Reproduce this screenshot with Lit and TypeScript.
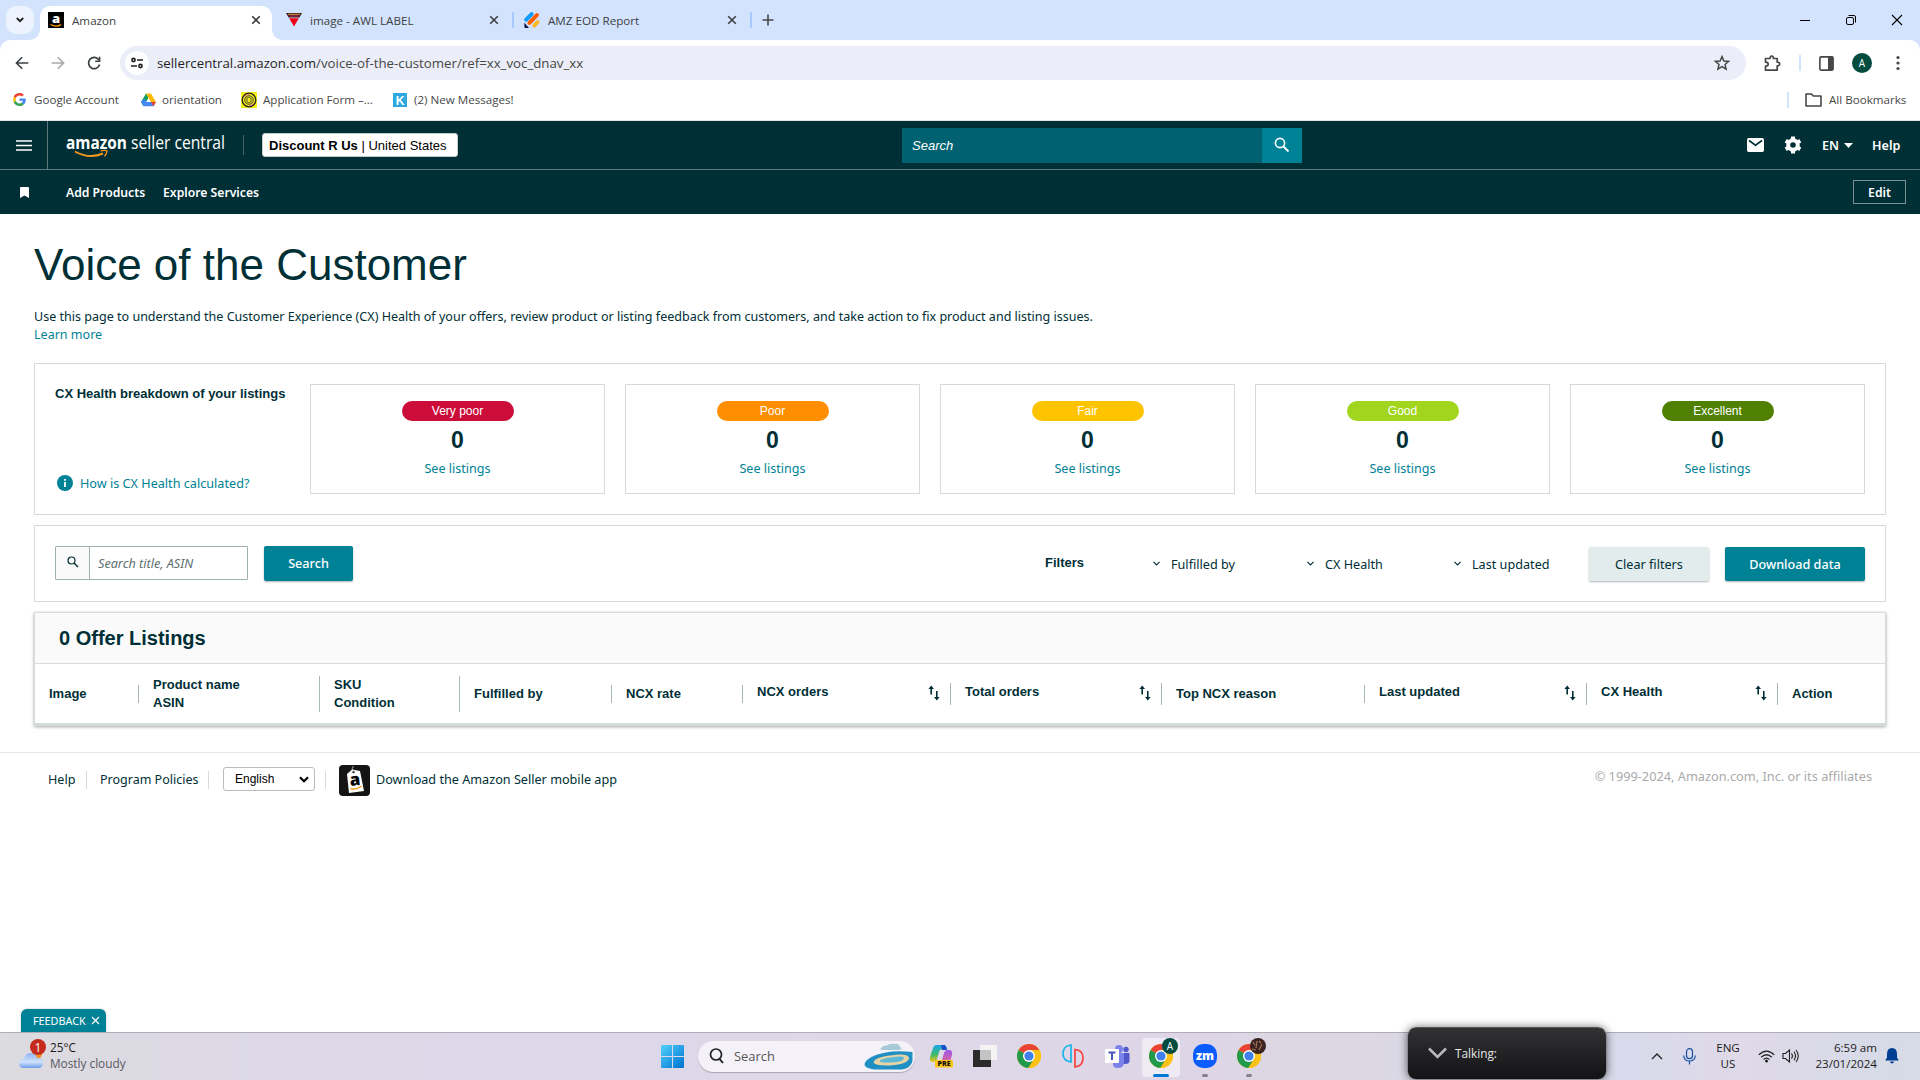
import { LitElement, html, css, svg } from "lit";
import { customElement } from "lit/decorators.js";

type Col = { a: string; b?: string; cls: string; sort?: boolean };

const COLS: Col[] = [
  { a: "Image", cls: "c1" },
  { a: "Product name", b: "ASIN", cls: "c2" },
  { a: "SKU", b: "Condition", cls: "c3" },
  { a: "Fulfilled by", cls: "c4" },
  { a: "NCX rate", cls: "c5" },
  { a: "NCX orders", cls: "c6", sort: true },
  { a: "Total orders", cls: "c7", sort: true },
  { a: "Top NCX reason", cls: "c8" },
  { a: "Last updated", cls: "c9", sort: true },
  { a: "CX Health", cls: "c10", sort: true },
  { a: "Action", cls: "c11" },
];

const HEALTH = [
  ["Very poor", "vp"],
  ["Poor", "po"],
  ["Fair", "fa"],
  ["Good", "go"],
  ["Excellent", "ex"],
];

const closeX = html`<svg class="x" width="10" height="10" viewBox="0 0 10 10"><path d="M1.2 1.2 8.8 8.8M8.8 1.2 1.2 8.8" stroke="#3c4043" stroke-width="1.6" fill="none"/></svg>`;

const chromeMark = svg`
  <circle cx="12" cy="12" r="12" fill="#fbc116"/>
  <path d="M12 12 1.6 6A12 12 0 0 1 22.4 6H12Z" fill="#ea4335"/>
  <path d="M1.6 6A12 12 0 0 0 11.4 24L17 15 12 12Z" fill="#229a4b"/>
  <path d="M12 6H22.4A12 12 0 0 1 11.4 24L17.2 15Z" fill="#fbc116"/>
  <circle cx="12" cy="12" r="6" fill="#fff"/>
  <circle cx="12" cy="12" r="4.6" fill="#3f80ec"/>`;

@customElement("app-root")
export class AppRoot extends LitElement {
  static styles = css`
    :host { display: flex; flex-direction: column; width: 1920px; height: 1080px; overflow: hidden; background: #fff; color: #002f36; font-family: "Noto Sans", sans-serif; font-size: 12.65px; }
    * { box-sizing: border-box; }
    svg { display: block; flex: none; overflow: visible; }
    .row { display: flex; align-items: center; }
    .ui { font-family: "Open Sans", sans-serif; }
    .arial { font-family: "Liberation Sans", sans-serif; }
    span, a, b { white-space: nowrap; }
    .grow { flex: 1; }

    .tabs { height: 40px; flex: none; background: #d3e3fd; display: flex; align-items: flex-start; font-size: 11.65px; color: #3c4043; }
    .chev { width: 28px; height: 28px; margin: 6px 6px 0; border-radius: 10px; background: #ecf3fe; display: grid; place-items: center; }
    .tab { height: 28px; margin-top: 6px; display: flex; align-items: center; }
    .tab.on { position: relative; width: 232px; height: 34px; padding: 0 11px 6px 8px; background: #fff; border-radius: 10px 10px 0 0; }
    .tab.on::before, .tab.on::after { content: ""; position: absolute; bottom: 0; width: 10px; height: 10px; }
    .tab.on::before { left: -10px; background: radial-gradient(circle at 0 0, transparent 9.5px, #fff 10px); }
    .tab.on::after { right: -10px; background: radial-gradient(circle at 100% 0, transparent 9.5px, #fff 10px); }
    .tab span { margin-left: 8px; flex: 1; }
    .t2 { width: 240px; padding: 0 13px 0 14px; }
    .t3 { width: 236px; padding: 0 13px 0 10px; }
    .tsep { width: 2px; height: 16px; margin-top: 12px; background: #a8c7fa; border-radius: 1px; }
    .plus { margin: 14px 0 0 10px; }
    .win { display: flex; gap: 33px; padding: 13px 16px 0 0; }

    .bar { height: 46px; flex: none; background: #d3e3fd; }
    .barin { height: 46px; background: #fff; border-radius: 10px 10px 0 0; padding: 0 20px 0 15px; }
    .url { flex: 1; height: 34px; margin: 0 18px 0 19px; padding: 0 16px 0 5px; border-radius: 17px; background: #ebeef8; font-size: 13.28px; color: #1f1f1f; }
    .site { width: 24px; height: 24px; border-radius: 50%; background: #fff; display: grid; place-items: center; margin-right: 8px; }
    .url i { font-style: normal; color: #474747; }
    .vs { width: 2px; height: 16px; flex: none; background: #d3e3fd; }
    .m18 { margin: 0 18px; }
    .ava { width: 20px; height: 20px; flex: none; margin-left: 18px; border-radius: 50%; background: #044c3f; color: #fff; font-size: 10px; display: grid; place-items: center; }
    .dots { margin-left: 24px; }

    .bm { height: 35px; flex: none; padding: 0 15px 7px 13px; border-bottom: 1px solid #e3e3e3; font-size: 11.6px; color: #474747; }
    .bm span { margin-left: 6px; }
    .bm .k1 { width: 107px; margin-left: 8px; }
    .k2 { width: 79px; }
    .k3 { width: 130px; }
    .bm .k4 { margin-left: 7px; }
    .fo { margin-left: 16px; }
    .bm .k5 { width: 76px; margin-left: 7px; }

    .nav { height: 49px; flex: none; background: #002f36; color: #fff; border-bottom: 1px solid #5f777b; font-weight: 600; font-size: 12.6px; }
    .ham { width: 48px; height: 48px; border-right: 1px solid #5f777b; display: grid; place-items: center; }
    .logo { margin-left: 18px; width: 160px; }
    .nsep { width: 1px; height: 20px; background: #4b6266; margin: 0 18px 0 17px; }
    .store { width: 196px; height: 24px; background: #fff; border: 1px solid #c3cccd; border-radius: 3px; color: #000; font-size: 13px; font-weight: 400; padding-left: 6px; }
    .store b { font-weight: 700; }
    .sbox { width: 400px; height: 35px; margin-left: 444px; }
    .sin { width: 360px; height: 35px; background: #006170; padding-left: 10px; font-style: italic; font-weight: 400; font-size: 13px; }
    .sbtn { width: 40px; height: 35px; background: #008296; display: grid; place-items: center; }
    .gear { margin: 0 20px 0 20px; }
    .caret { margin: 0 19px 0 4px; }
    .hp { margin-right: 18px; width: 30px; }
    .en { width: 18px; }
    .sub { height: 44px; flex: none; background: #002f36; color: #fff; font-weight: 600; padding: 0 14px 0 20px; font-size: 12.2px; }
    .s1 { margin-left: 37px; width: 97px; }
    .edit { width: 53px; height: 24px; border: 1px solid #7d9093; justify-content: center; }

    .page { padding: 0 34px; flex: none; }
    h1 { margin: 25px 0 0; font: 400 44px/51px "Liberation Sans", sans-serif; height: 51px; white-space: nowrap; }
    .intro { margin: 18px 0 0; line-height: 18px; height: 36px; font-size: 12.54px; }
    .intro div { white-space: nowrap; }
    .link { color: #008296; }
    .card { border: 1px solid #d5dbdb; }
    .health { margin-top: 19px; height: 152px; display: flex; gap: 20px; padding: 20px 20px 0 20px; }
    .hl { width: 235px; display: flex; flex-direction: column; padding-top: 1px; }
    .hl b { font-size: 13px; line-height: 18px; }
    .how { margin-top: 71px; padding-left: 2px; gap: 7px; height: 18px; }
    .box { width: 295px; height: 110px; display: flex; flex-direction: column; align-items: center; border: 1px solid #d5dbdb; padding-top: 16px; }
    .pill { width: 112px; height: 20px; border-radius: 10px; color: #fff; font-size: 12px; line-height: 20px; text-align: center; }
    .vp { background: #cc0c39; } .po { background: #ff8f00; } .fa { background: #ffc400; } .go { background: #a2d61e; } .ex { background: #508000; }
    .n { font-size: 23px; font-weight: 700; line-height: 26px; margin-top: 6px; }
    .box .link { line-height: 18px; margin-top: 7px; font-size: 12.55px; }

    .tools { margin-top: 10px; height: 77px; padding: 0 20px; }
    .grp { width: 193px; height: 34px; border: 1px solid #9fb0b0; background: #fff; border-radius: 1px; margin-bottom: 1px; }
    .gi { width: 34px; height: 32px; background: #fafafa; border-right: 1px solid #9fb0b0; display: grid; place-items: center; padding-bottom: 2px; }
    .gt { padding-left: 8px; font-style: italic; color: #5d6f72; }
    .btn { height: 34px; border-radius: 2px; background: #008296; color: #fff; font-weight: 500; justify-content: center; box-shadow: 0 1px 2px rgba(0,0,0,.3); }
    .b1 { width: 89px; height: 35px; margin-left: 16px; padding-bottom: 1px; }
    .b2 { width: 120px; background: #e3eced; color: #002f36; font-weight: 400; margin: 1px 16px 0 40px; }
    .b3 { width: 140px; margin-top: 1px; }
    .f { gap: 11px; }
    .f1 { width: 154px; } .f2 { width: 147px; } .f3 { width: 95px; }
    .flt { font-size: 13px; font-weight: 700; width: 108px; padding-bottom: 3px; }

    .tbl { margin-top: 10px; height: 114px; border-bottom: 3px solid #d5dbdb; box-shadow: 0 1px 3px rgba(0,0,0,.35); }
    .th { height: 51px; background: #fafafa; border-bottom: 1px solid #d5dbdb; padding-left: 24px; font-size: 20px; font-weight: 700; }
    .cols { height: 60px; font-size: 13px; font-weight: 700; line-height: 18px; }
    .col { display: flex; align-items: center; border-right: 1px solid #aab7b8; height: 18px; padding-left: 14px; }
    .two { height: 36px; }
    .srt { height: 22px; padding-right: 10px; justify-content: space-between; }
    .srt span { margin-top: -4px; }
    .srt svg { margin-top: -2px; }
    .c1 { width: 104px; } .c2 { width: 181px; } .c3 { width: 140px; } .c4 { width: 152px; } .c5 { width: 131px; } .c6 { width: 208px; } .c7 { width: 211px; } .c8 { width: 203px; } .c9 { width: 222px; } .c10 { width: 191px; } .c11 { border: 0; }

    .foot { margin-top: 26px; border-top: 1px solid #e7e9e9; height: 54px; flex: none; padding: 0 48px; }
    .foot span { margin-top: -1px; }
    .fs { width: 1px; height: 18px; flex: none; background: #d5dbdb; margin: 0 13px 0 10px; }
    .h1x { width: 28px; } .h2x { width: 98px; font-size: 12.5px; }
    .app { margin: 2px 5px 0 0; }
    .sel { width: 92px; height: 24px; border: 1px solid #bbb; border-radius: 3px; margin: -1px 0 0 1px; padding: 0 5px 0 11px; color: #000; font-size: 12px; justify-content: space-between; }
    .copy { color: #aaa; padding-bottom: 6px; font-size: 12.75px; }

    .fb { width: 85px; height: 23px; margin-left: 21px; background: #008296; color: #fff; border-radius: 6px 6px 0 0; font-size: 10.8px; padding-left: 12px; gap: 5px; box-shadow: 0 0 2px rgba(0,0,0,.3); }
    .task { height: 48px; flex: none; border-top: 1px solid #b0adb8; background: linear-gradient(90deg, #dcdbdf 0, #dcd8e6 270px, #dcd8ea 540px, #ded8e8 800px, #ded6e6 1200px, #dcd7e2 1320px, #d8daec 1620px, #dfd9e8 1740px, #d5dbe7 1920px); position: relative; font-size: 11.8px; color: #1b1b1b; }
    .wx { margin-left: 19px; width: 642px; padding-bottom: 2px; }
    .wx .txt { line-height: 16px; margin-left: 4px; padding-bottom: 1px; }
    .grey { color: #5a5960; }
    .tsearch { width: 217px; height: 31px; border-radius: 16px; background: #f4f2f8; box-shadow: 0 1px 1px #aaa6b4; margin: 0 11px 1px 14px; padding: 0 1px 0 11px; color: #555; font-size: 12.9px; gap: 10px; }
    .ic { width: 30px; height: 44px; margin-right: 14px; display: flex; align-items: center; justify-content: center; position: relative; }
    .ic > svg { margin-bottom: 1px; }
    .act::before { content: ""; position: absolute; left: -4px; right: -4px; top: 3px; height: 39px; border-radius: 4px; background: #eeebf4; }
    .act svg, .dot svg { position: relative; }
    .face svg, .act svg { top: -2px; }
    .act::after, .dot::after { content: ""; position: absolute; bottom: 2px; width: 16px; height: 3px; border-radius: 2px; background: #0078d4; }
    .dot::after { width: 6px; background: #85828c; }
    .talk { position: absolute; left: 1407px; top: -6px; width: 200px; height: 53px; border-radius: 9px; border: 1px solid #8b8b8f; border-top-color: #555; background: linear-gradient(#323234, #131315); box-shadow: 0 0 9px rgba(0,0,0,.55); color: #e8e8e8; padding: 0 0 2px 20px; gap: 8px; }
    .tray { padding: 0 21px 1px 0; }
    .mic { margin-left: 20px; }
    .eng { width: 30px; margin: 0 15px 0 17px; }
    .spk { margin-left: 7px; }
    .clock { width: 64px; margin: 0 8px 0 14px; white-space: nowrap; }
    .ctr { text-align: center; line-height: 16px; font-size: 11.6px; }
    .rt { display: flex; flex-direction: column; align-items: flex-end; line-height: 16px; font-size: 11.6px; padding-bottom: 1px; }
  `;

  private sortIcon() {
    return html`<svg width="12" height="16" viewBox="0 0 12 16"><path d="M3.2 9.5V2M8.8 6v8" stroke="#002f36" stroke-width="1.6"/><path d="M.4 4 3.2.6 6 4ZM6 12 8.8 15.4 11.6 12Z" fill="#002f36"/></svg>`;
  }

  private chevron() {
    return html`<svg width="7" height="5" viewBox="0 0 7 5"><path d="M.5.8 3.5 3.8 6.5.8" fill="none" stroke="#002f36" stroke-width="1.2"/></svg>`;
  }

  private chrome() {
    return html`
      <div class="tabs ui">
        <div class="chev"><svg width="8" height="6" viewBox="0 0 8 6"><path d="M.8 1 4 4.2 7.2 1" fill="none" stroke="#1f1f1f" stroke-width="1.8"/></svg></div>
        <div class="tab on">
          <svg width="16" height="16" viewBox="0 0 16 16"><rect width="16" height="16" fill="#000"/><text x="8" y="10.5" text-anchor="middle" font-family="Open Sans" font-weight="800" font-size="13" fill="#fff">a</text><path d="M2.5 12.5Q8 15.6 13 12.6" fill="none" stroke="#ff9900" stroke-width="1.3"/></svg>
          <span class="g1">Amazon</span>${closeX}
        </div>
        <div class="tab t2">
          <svg width="16" height="16" viewBox="0 0 16 16"><path d="M0 1H16L13.4 5.4H2.6Z" fill="#3a1626"/><path d="M3.2 6.2H12.8L8 14.500Z" fill="#f00018"/><path d="M2 2.3H14" stroke="#c58a3c" stroke-width="1.2"/><path d="M3.500 4H12.500" stroke="#c0304a" stroke-width="1"/></svg>
          <span>image - AWL LABEL</span>${closeX}
        </div>
        <div class="tsep"></div>
        <div class="tab t3">
          <svg width="16" height="16" viewBox="0 0 16 16"><path d="M2.2 7.6 7.6 2.2" stroke="#0a9bff" stroke-width="4" stroke-linecap="round"/><path d="M5.4 10.8 13 3" stroke="#ff6100" stroke-width="4" stroke-linecap="round"/><path d="M10.2 13.6 13.6 10.2" stroke="#ffb629" stroke-width="4" stroke-linecap="round"/><path d="M.4 10.8 5 16H1.4Q.4 16 .4 15Z" fill="#0a1551"/></svg>
          <span>AMZ EOD Report</span>${closeX}
        </div>
        <div class="tsep"></div>
        <svg class="plus" width="12" height="12" viewBox="0 0 12 12"><path d="M6 .5V11.5M.5 6H11.5" stroke="#474747" stroke-width="1.6"/></svg>
        <div class="grow"></div>
        <div class="win">
          <svg width="14" height="14" viewBox="0 0 14 14"><path d="M2 7.5H12" stroke="#000"/></svg>
          <svg width="12" height="14" viewBox="0 0 12 14"><rect x="1.5" y="4.5" width="7" height="7" rx="1.5" fill="none" stroke="#000"/><path d="M3.5 2.5H9a1.5 1.5 0 0 1 1.5 1.5V9.5" fill="none" stroke="#000"/></svg>
          <svg width="14" height="14" viewBox="0 0 14 14"><path d="M2 2 12 12M12 2 2 12" stroke="#000" stroke-width="1.1"/></svg>
        </div>
      </div>
      <div class="bar"><div class="barin row">
        <svg width="14" height="14" viewBox="0 0 14 14"><path d="M13.3 7H1.6M7.2 1.2 1.4 7 7.2 12.8" fill="none" stroke="#3c4043" stroke-width="1.6"/></svg>
        <svg class="fw" width="35" height="14" viewBox="0 0 35 14"><path d="M22.7 7H34.4M28.8 1.2 34.6 7 28.8 12.8" fill="none" stroke="#a5a7a9" stroke-width="1.6"/></svg>
        <svg width="37" height="14" viewBox="0 0 37 14"><path d="M34.9 4A5.6 5.6 0 1 0 35.6 8.5" fill="none" stroke="#3c4043" stroke-width="1.7"/><path d="M36.4 .8V6H31.2V4.4H34.8V.8Z" fill="#3c4043"/></svg>
        <div class="url row ui">
          <div class="site"><svg width="12" height="12" viewBox="0 0 12 12"><g fill="none" stroke="#1f1f1f" stroke-width="1.6"><circle cx="2.5" cy="3" r="1.6"/><path d="M6 3H12M0 9H6"/><circle cx="9.5" cy="9" r="1.6"/></g></svg></div>
          <span class="u1">sellercentral.amazon.com<i>/voice-of-the-customer/ref=xx_voc_dnav_xx</i></span>
          <div class="grow"></div>
          <svg width="16" height="16" viewBox="0 0 16 16"><path d="M8 1.6 9.9 6 14.6 6.4 11 9.5 12.1 14.2 8 11.7 3.9 14.2 5 9.5 1.4 6.4 6.1 6Z" fill="none" stroke="#474747" stroke-width="1.5"/></svg>
        </div>
        <svg width="17" height="17" viewBox="0 0 17 17"><path d="M1.5 3.5H6Q6 1 7.7 1T9.4 3.5H13.2V7.2Q15.8 7.2 15.8 9T13.2 10.8V15.2H1.5V11.2Q4.2 11 4.2 9.2T1.5 7.2Z" fill="none" stroke="#474747" stroke-width="1.7" stroke-linejoin="round"/></svg>
        <div class="vs m18"></div>
        <svg class="pnl" width="15" height="15" viewBox="0 0 15 15"><rect x=".9" y=".9" width="13.2" height="13.2" rx="1" fill="none" stroke="#474747" stroke-width="1.6"/><path d="M9 1H14V14H9Z" fill="#474747"/></svg>
        <div class="ava ui">A</div>
        <svg class="dots" width="4" height="16" viewBox="0 0 4 16" fill="#474747"><circle cx="2" cy="2.5" r="1.6"/><circle cx="2" cy="8" r="1.6"/><circle cx="2" cy="13.5" r="1.6"/></svg>
      </div></div>
      <div class="bm row ui">
        <svg width="13" height="13" viewBox="0 0 48 48"><path fill="#ea4335" d="M24 9.5c3.5 0 6.700 1.200 9.200 3.600l6.900-6.900C35.900 2.400 30.500 0 24 0 14.600 0 6.500 5.400 2.600 13.200l8 6.200C12.400 13.700 17.700 9.500 24 9.500z"/><path fill="#4285f4" d="M47 24.600c0-1.600-.2-3.100-.4-4.600H24v9h12.900c-.6 3-2.200 5.500-4.700 7.200l7.700 6C44.400 38 47 32 47 24.600z"/><path fill="#fbbc05" d="M10.500 28.600a14.500 14.500 0 0 1 0-9.200l-8-6.200a24 24 0 0 0 0 21.600z"/><path fill="#34a853" d="M24 48c6.500 0 11.900-2.100 15.900-5.800l-7.700-6c-2.200 1.500-4.900 2.300-8.200 2.300-6.300 0-11.600-4.200-13.500-9.900l-8 6.200C6.500 42.600 14.600 48 24 48z"/></svg>
        <span class="k1">Google Account</span>
        <svg class="i2" width="15" height="14" viewBox="0 0 16 14"><path d="M5.4 0 0 9 2.7 13.7 8 4.5Z" fill="#0f9d58"/><path d="M5.4 0H10.6L16 9H10.6Z" fill="#ffba00"/><path d="M5.4 9H16L13.3 13.7H2.7Z" fill="#4285f4"/><path d="M10.6 9H16L13.3 13.7Z" fill="#ea4335"/><path d="M0 9 2.7 13.7 5.4 9 4 5Z" fill="#4285f4"/></svg>
        <span class="k2">orientation</span>
        <svg class="i3" width="16" height="16" viewBox="0 0 16 16"><rect width="16" height="16" fill="#f5f014"/><circle cx="8" cy="8" r="6.8" fill="none" stroke="#222" stroke-width="1.3"/><circle cx="8" cy="8" r="4.2" fill="none" stroke="#333" stroke-width="1"/><path d="M3 5Q4.500 2.500 8 2.300M13 11Q11.500 13.500 8 13.700" fill="none" stroke="#e8708a" stroke-width="1"/><rect x="6" y="5.5" width="4" height="5" rx="1.5" fill="none" stroke="#333" stroke-width=".8"/></svg>
        <span class="k3">Application Form –...</span>
        <svg class="i4" width="14" height="14" viewBox="0 0 14 14"><rect width="14" height="14" fill="#2fa8e0"/><text x="7" y="11.5" text-anchor="middle" font-family="Liberation Sans" font-weight="700" font-size="12" fill="#fff">K</text></svg>
        <span class="k4">(2) New Messages!</span>
        <div class="grow"></div>
        <div class="vs"></div>
        <svg class="fo" width="17" height="14" viewBox="0 0 17 14"><path d="M1 1H6.5L8.3 3H16V13H1Z" fill="none" stroke="#474747" stroke-width="1.6" stroke-linejoin="round"/></svg>
        <span class="k5">All Bookmarks</span>
      </div>`;
  }

  private header() {
    return html`
      <div class="nav row">
        <div class="ham"><svg width="16" height="11" viewBox="0 0 16 11"><path d="M0 1H16M0 5.5H16M0 10H16" stroke="#fff" stroke-width="1.7"/></svg></div>
        <svg class="logo" width="160" height="30" viewBox="0 0 160 30"><text x="0" y="19" font-family="Open Sans" font-weight="700" font-size="17" fill="#fff" textLength="61" lengthAdjust="spacingAndGlyphs">amazon</text><text x="65" y="19" font-family="Open Sans" font-weight="400" font-size="17.5" fill="#fff" textLength="94" lengthAdjust="spacingAndGlyphs">seller central</text><path d="M9 21.500Q23 29.500 37 23.500" fill="none" stroke="#f7981d" stroke-width="2"/><path d="M34.500 20.800Q39.500 19.800 41 20.800 41 23.300 38.500 26.300" fill="none" stroke="#f7981d" stroke-width="1.3"/></svg>
        <div class="nsep"></div>
        <div class="store row arial"><span><b>Discount R Us</b> | United States</span></div>
        <div class="sbox row"><div class="sin row arial">Search</div><div class="sbtn"><svg width="16" height="16" viewBox="0 0 16 16"><circle cx="6" cy="6" r="4.6" fill="none" stroke="#fff" stroke-width="1.6"/><path d="M9.5 9.5 14.5 14.5" stroke="#fff" stroke-width="1.8"/></svg></div></div>
        <div class="grow"></div>
        <svg class="mail" width="17" height="14" viewBox="0 0 17 14"><rect width="17" height="14" rx="1.8" fill="#fff"/><path d="M2 2.5 8.5 7.2 15 2.5" fill="none" stroke="#002f36" stroke-width="1.6"/></svg>
        <svg class="gear" width="18" height="18" viewBox="0 0 18 18"><circle cx="9" cy="9" r="4.8" fill="none" stroke="#fff" stroke-width="4"/><path d="M9 .6V4M9 14V17.4M1.7 4.8 4.7 6.5M13.3 11.5 16.3 13.2M1.7 13.2 4.7 11.5M13.3 6.5 16.3 4.8" stroke="#fff" stroke-width="4"/></svg>
        <span class="en">EN</span>
        <svg class="caret" width="9" height="5" viewBox="0 0 9 5"><path d="M0 0H9L4.5 5Z" fill="#fff"/></svg>
        <span class="hp">Help</span>
      </div>
      <div class="sub row">
        <svg width="9" height="11" viewBox="0 0 9 11"><path d="M0 1Q0 0 1 0H8Q9 0 9 1V11L4.5 8.5 0 11Z" fill="#fff"/></svg>
        <span class="s1">Add Products</span><span class="s2">Explore Services</span>
        <div class="grow"></div><div class="edit row">Edit</div>
      </div>`;
  }

  private main() {
    return html`
      <div class="page">
        <h1>Voice of the Customer</h1>
        <div class="intro"><div><span class="p1">Use this page to understand the Customer Experience (CX) Health of your offers, review product or listing feedback from customers, and take action to fix product and listing issues.</span></div><div><span class="link">Learn more</span></div></div>
        <div class="card health">
          <div class="hl"><b class="arial">CX Health breakdown of your listings</b>
            <div class="how row link"><svg width="16" height="16" viewBox="0 0 16 16"><circle cx="8" cy="8" r="8" fill="#008296"/><path d="M8 7V12M8 4V5.8" stroke="#fff" stroke-width="1.8"/></svg><span>How is CX Health calculated?</span></div></div>
          ${HEALTH.map(([t, c]) => html`<div class="box"><div class="pill arial ${c}">${t}</div><div class="n arial">0</div><span class="link">See listings</span></div>`)}
        </div>
        <div class="card tools row">
          <div class="grp row"><div class="gi"><svg width="12" height="12" viewBox="0 0 12 12"><circle cx="4.5" cy="4.5" r="3.5" fill="none" stroke="#002f36" stroke-width="1.2"/><path d="M7 7 11 11" stroke="#002f36" stroke-width="1.5"/></svg></div><span class="gt">Search title, ASIN</span></div>
          <div class="btn b1 row"><span>Search</span></div>
          <div class="grow"></div>
          <div class="flt arial">Filters</div>
          <div class="f f1 row">${this.chevron()}<span>Fulfilled by</span></div>
          <div class="f f2 row">${this.chevron()}<span>CX Health</span></div>
          <div class="f f3 row">${this.chevron()}<span>Last updated</span></div>
          <div class="btn b2 row"><span>Clear filters</span></div>
          <div class="btn b3 row"><span>Download data</span></div>
        </div>
        <div class="card tbl arial">
          <div class="th row">0 Offer Listings</div>
          <div class="cols row">
            ${COLS.map((c) => html`<div class="col ${c.cls} ${c.b ? "two" : ""} ${c.sort ? "srt" : ""}"><span>${c.a}${c.b ? html`<br />${c.b}` : ""}</span>${c.sort ? this.sortIcon() : ""}</div>`)}
          </div>
        </div>
      </div>
      <div class="foot row">
        <span class="h1x">Help</span><div class="fs"></div><span class="h2x">Program Policies</span><div class="fs"></div>
        <div class="sel row arial"><span>English</span><svg width="10" height="7" viewBox="0 0 10 7"><path d="M1 1.2 5 5.2 9 1.2" fill="none" stroke="#000" stroke-width="2.2"/></svg></div>
        <div class="fs"></div>
        <svg class="app" width="32" height="32" viewBox="0 0 32 32"><rect width="31" height="31" rx="4" fill="#141414"/><path d="M8 9 13 4.5 21 6 25 26 10 28Z" fill="#fff"/><circle cx="14.5" cy="7" r="1.2" fill="#141414"/><path d="M14.5 7Q12 3 14.5 1" stroke="#ddd" fill="none" stroke-width=".8"/><text x="16" y="20.5" text-anchor="middle" font-family="Open Sans" font-weight="800" font-size="17" fill="#000" transform="rotate(-6 16 16)">a</text><path d="M11.5 23.5Q17 25.5 22.5 21" fill="none" stroke="#f7981d" stroke-width="1.5"/></svg>
        <span class="h3x">Download the Amazon Seller mobile app</span>
        <div class="grow"></div><span class="copy">© 1999-2024, Amazon.com, Inc. or its affiliates</span>
      </div>
      <div class="grow"></div>
      <div class="fb row"><span>FEEDBACK</span><svg width="9" height="9" viewBox="0 0 9 9"><path d="M1 1 8 8M8 1 1 8" stroke="#fff" stroke-width="1.2"/></svg></div>`;
  }

  private taskbar() {
    return html`
      <div class="task row ui">
        <div class="wx row">
          <svg width="27" height="36" viewBox="0 0 27 36"><defs><linearGradient id="cl" x1="0" y1="0" x2="0" y2="1"><stop offset="0" stop-color="#8fb3f3"/><stop offset=".6" stop-color="#cfe2fb"/><stop offset="1" stop-color="#6f9cec"/></linearGradient></defs><circle cx="18" cy="16" r="5" fill="#f39323"/><path d="M5 30Q0 30 0 25.500T5 21Q6 15 11.500 15 17 15 18 20 24 20 24 25T19 30Z" fill="url(#cl)"/><circle cx="19" cy="9" r="8" fill="#c42b1c"/><text x="19" y="13.5" text-anchor="middle" font-size="12" fill="#fff">1</text></svg>
          <div class="txt"><div>25°C</div><div class="grey">Mostly cloudy</div></div>
        </div>
        <svg width="23" height="23" viewBox="0 0 23 23"><defs><linearGradient id="wn" x1="0" y1="0" x2="1" y2="1"><stop offset="0" stop-color="#4fd2fb"/><stop offset="1" stop-color="#006fd0"/></linearGradient></defs><path d="M1 0H11V11H0V1Q0 0 1 0ZM12 0H22Q23 0 23 1V11H12ZM0 12H11V23H1Q0 23 0 22ZM12 12H23V22Q23 23 22 23H12Z" fill="url(#wn)"/></svg>
        <div class="tsearch row">
          <svg width="15" height="16" viewBox="0 0 15 16"><circle cx="7" cy="6.5" r="5.5" fill="none" stroke="#222" stroke-width="1.7"/><path d="M10.5 10.8 14 15" stroke="#222" stroke-width="1.9"/></svg><span>Search</span><div class="grow"></div>
          <svg width="50" height="27" viewBox="0 0 50 27"><path d="M17 5Q19 2 23 2.5 26 0 30 1 35 0 36 4 39 5 36 7H19Q15 7 17 5Z" fill="#a9cbd8"/><path d="M22 9.500Q32 7.500 48.500 9V18Q47 25 38 26.500H10Q0 25 .5 21 3 13 22 9.500Z" fill="#1f8fc4"/><path d="M26 12.5Q43 9.5 45 14.5 45 21 26 22.5 11 23 9.5 19.5 10 14.5 26 12.5Z" fill="#e6d3a6"/><path d="M27 14.5Q39 12.5 40 15 40 19 27 19.5 16 20 15.5 18 17 15.5 27 14.5Z" fill="#5cb8d4"/></svg>
        </div>
        <div class="ic"><svg width="24" height="26" viewBox="0 0 24 26"><defs><linearGradient id="cp1" x1="0" y1="0" x2="0" y2="1"><stop offset="0" stop-color="#18a8ee"/><stop offset=".55" stop-color="#3db86b"/><stop offset="1" stop-color="#f3c518"/></linearGradient><linearGradient id="cp2" x1="0" y1="0" x2="0" y2="1"><stop offset="0" stop-color="#9b5be8"/><stop offset="1" stop-color="#f0668c"/></linearGradient></defs><path d="M7 2H15Q17 2 18 6H13Q11 6 10 9L8 16Q7 19 4 19 0 19 1 14L4 5Q5 2 7 2Z" fill="url(#cp1)"/><path d="M12 2H15Q17 2 18 7H13Z" fill="#1b4fc4"/><path d="M18 7H20Q24 7 23 12L21 19Q20 22 17 22H9Q12 21 13 17L15 10Q16 7 18 7Z" fill="url(#cp2)"/><rect x="6" y="17" width="18" height="7.5" rx="1.5" fill="#ffc61a"/><text x="15" y="23.3" text-anchor="middle" font-weight="800" font-size="7" fill="#111">PRE</text></svg></div>
        <div class="ic"><svg width="24" height="24" viewBox="0 0 24 24"><rect y="6" width="18" height="17" fill="#2b2b2b"/><rect x="7" y="1" width="17" height="15" fill="#f3f3f3"/><rect x="7" y="6" width="11" height="10" fill="#c3c3c3"/></svg></div>
        <div class="ic"><svg width="24" height="24" viewBox="0 0 24 24">${chromeMark}</svg></div>
        <div class="ic"><svg width="24" height="26" viewBox="0 0 24 26"><path d="M10 2V19Q2 18 2 10.5T10 2Z" fill="none" stroke="#18b4e8" stroke-width="1.7"/><path d="M14 6.5V24Q22 23 22 15T14 6.5Z" fill="none" stroke="#f8443e" stroke-width="1.7"/></svg></div>
        <div class="ic"><svg width="25" height="24" viewBox="0 0 25 24"><circle cx="14" cy="5" r="4" fill="#7b83eb"/><circle cx="21" cy="5.5" r="2.7" fill="#5059c9"/><path d="M17 9H24.5V17Q24.5 20 20 20H17Z" fill="#5059c9"/><path d="M8 9H19V18Q19 24 13 24T8 19Z" fill="#7b83eb"/><rect y="5" width="14" height="14" rx="1" fill="#fff"/><path d="M3.5 8.5H10.5M7 8.5V16" stroke="#4b53bc" stroke-width="2"/></svg></div>
        <div class="ic act"><svg width="32" height="34" viewBox="0 0 32 34"><g transform="translate(4 7)">${chromeMark}</g><circle cx="25" cy="9" r="8" fill="#044c3f"/><text x="25" y="12.5" text-anchor="middle" font-size="10" fill="#fff">A</text></svg></div>
        <div class="ic dot"><svg width="24" height="24" viewBox="0 0 24 24"><rect width="24" height="24" rx="10" fill="#0b5cff"/><text x="12" y="16" text-anchor="middle" font-weight="800" font-size="12" fill="#fff" textLength="18" lengthAdjust="spacingAndGlyphs">zm</text></svg></div>
        <div class="ic dot face"><svg width="32" height="34" viewBox="0 0 32 34"><g transform="translate(4 7)">${chromeMark}</g><circle cx="25" cy="9" r="8" fill="#3b2420"/><path d="M20 5 22 8M24 4 23 11M29 7 26 13M19 12 23 13M26 4 28 6" stroke="#a8705c" stroke-width="1.2"/></svg></div>
        <div class="grow"></div>
        <div class="tray row">
          <svg width="12" height="7" viewBox="0 0 12 7"><path d="M1 6 6 1 11 6" fill="none" stroke="#222" stroke-width="1.4"/></svg>
          <svg class="mic" width="13" height="17" viewBox="0 0 13 17"><rect x="3.5" y=".7" width="6" height="10" rx="3" fill="none" stroke="#1450a0" stroke-width="1.2"/><path d="M.7 7.5Q1 13 6.5 13T12.3 7.5M6.5 13V16.5" fill="none" stroke="#1450a0" stroke-width="1.2"/></svg>
          <div class="ctr eng"><div>ENG</div><div>US</div></div>
          <svg class="wifi" width="17" height="13" viewBox="0 0 17 13"><g fill="none" stroke="#222" stroke-width="1.2"><path d="M.8 4.8Q8.5-2.6 16.2 4.8M3.2 7.3Q8.5 2.2 13.8 7.3M5.5 9.6Q8.5 6.8 11.5 9.6"/></g><circle cx="8.5" cy="11" r="1.5" fill="#222"/></svg>
          <svg class="spk" width="17" height="14" viewBox="0 0 17 14"><path d="M1 4.5H3.5L7.5 1V13L3.5 9.5H1ZM9.5 4.5Q11.5 7 9.5 9.5M12 2.8Q15 7 12 11.2M14 1Q18.5 7 14 13" fill="none" stroke="#222" stroke-width="1.1"/></svg>
          <div class="rt clock"><div>6:59 am</div><div>23/01/2024</div></div>
          <svg class="bell" width="14" height="16" viewBox="0 0 14 16"><path d="M7 0Q12 0 12 6V9.5L13.8 12.5H.2L2 9.5V6Q2 0 7 0Z" fill="#003e92"/><path d="M4.8 13.5H9.2Q8.5 15.5 7 15.5T4.8 13.5Z" fill="#003e92"/></svg>
        </div>
        <div class="talk row"><svg width="19" height="12" viewBox="0 0 19 12"><path d="M1 1.5 9.5 10 18 1.5" fill="none" stroke="#b8b8ba" stroke-width="2.6"/></svg><span>Talking:</span></div>
      </div>`;
  }

  render() {
    return html`${this.chrome()}${this.header()}${this.main()}${this.taskbar()}`;
  }
}
